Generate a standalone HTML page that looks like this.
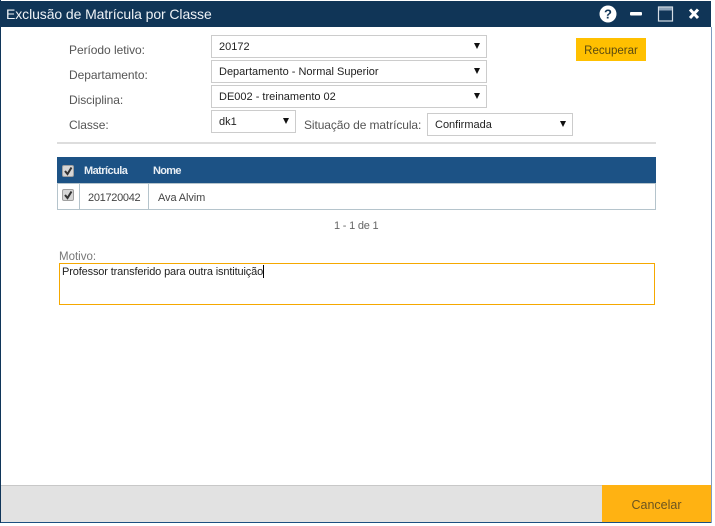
<!DOCTYPE html>
<html>
<head>
<meta charset="utf-8">
<style>
html,body{margin:0;padding:0;background:#fff;width:715px;height:526px;overflow:hidden}
body{font-family:"Liberation Sans",sans-serif;position:relative}
.a{position:absolute;white-space:nowrap}
.lbl{font-size:12px;color:#555;line-height:16px;letter-spacing:-.05px}
.sel{position:absolute;box-sizing:border-box;background:#fff;border:1px solid #ccc;height:23px;font-size:11px;color:#222;line-height:22px;padding-left:7px}
.sel:after{content:"";position:absolute;right:6px;top:7px;border-left:3.5px solid transparent;border-right:3.5px solid transparent;border-top:6px solid #111}
.cb{position:absolute;box-sizing:border-box;width:12px;height:12px;background:#d6d6d6;border:1px solid #a0a0a0;border-radius:2px}
</style>
</head>
<body>
<div class="a" style="left:0;top:0;width:712px;height:523px;background:#fff"></div>
<div class="a" style="left:0;top:0;width:1px;height:523px;background:#10365a"></div>
<div class="a" style="left:1px;top:522px;width:711px;height:1px;background:#1c4f80"></div>
<div class="a" style="left:711px;top:27px;width:1px;height:496px;background:#7f9cc0"></div>
<div class="a" style="left:0;top:1px;width:711px;height:26px;background:#103557"></div>
<div class="a" style="left:6px;top:5px;font-size:14px;line-height:18px;letter-spacing:-.09px;color:#eef2f6">Exclusão de Matrícula por Classe</div>

<svg class="a" style="left:595px;top:3px" width="112" height="22" viewBox="0 0 112 22">
<circle cx="13" cy="11" r="8.5" fill="#fff"/>
<text x="13" y="15.5" text-anchor="middle" font-family="Liberation Sans" font-weight="700" font-size="13" fill="#103557">?</text>
<rect x="35" y="9" width="12" height="3.5" rx="1" fill="#fff"/>
<rect x="63.5" y="4" width="14" height="14" fill="none" stroke="#d5dde5" stroke-width="1.2"/>
<rect x="64" y="4.5" width="13" height="3" fill="#8ea3b8"/>
<path d="M95 6.5 L103 15 M103 6.5 L95 15" stroke="#fff" stroke-width="3"/>
</svg>

<div class="a lbl" style="left:69px;top:42px">Período letivo:</div>
<div class="a lbl" style="left:69px;top:67px">Departamento:</div>
<div class="a lbl" style="left:69px;top:92px">Disciplina:</div>
<div class="a lbl" style="left:69px;top:117px">Classe:</div>
<div class="sel" style="left:211px;top:35px;width:276px">20172</div>
<div class="sel" style="left:211px;top:60px;width:276px">Departamento - Normal Superior</div>
<div class="sel" style="left:211px;top:85px;width:276px">DE002 - treinamento 02</div>
<div class="sel" style="left:211px;top:110px;width:85px">dk1</div>
<div class="a lbl" style="left:304px;top:117px;letter-spacing:-.1px">Situação de matrícula:</div>
<div class="sel" style="left:427px;top:113px;width:146px;line-height:22px">Confirmada</div>
<div class="a" style="left:576px;top:38px;width:70px;height:23px;background:#ffc000;color:#5a4a10;font-size:11.5px;line-height:26px;text-align:center">Recuperar</div>
<div class="a" style="left:57px;top:142px;width:599px;height:2px;background:#ddd"></div>

<div class="a" style="left:57px;top:157px;width:599px;height:26px;background:#1c5285"></div>
<div class="cb" style="left:62px;top:165px"></div>
<svg class="a" style="left:62px;top:165px" width="12" height="12"><path d="M3 6 L5.5 9 L9.5 2.5" fill="none" stroke="#333" stroke-width="2"/></svg>
<div class="a" style="left:84px;top:164px;font-size:11px;font-weight:700;line-height:14px;letter-spacing:-.55px;color:#e8eef4">Matrícula</div>
<div class="a" style="left:153px;top:164px;font-size:11px;font-weight:700;line-height:14px;letter-spacing:-.7px;color:#e8eef4">Nome</div>
<div class="a" style="left:57px;top:183px;width:599px;height:27px;box-sizing:border-box;border:1px solid #b5c4cc;background:#fff"></div>
<div class="a" style="left:79px;top:183px;width:1px;height:27px;background:#b5c4cc"></div>
<div class="a" style="left:148px;top:183px;width:1px;height:27px;background:#b5c4cc"></div>
<div class="cb" style="left:62px;top:189px"></div>
<svg class="a" style="left:62px;top:189px" width="12" height="12"><path d="M3 6 L5.5 9 L9.5 2.5" fill="none" stroke="#333" stroke-width="2"/></svg>
<div class="a" style="left:88px;top:191px;font-size:11px;line-height:14px;letter-spacing:-.3px;color:#444">201720042</div>
<div class="a" style="left:158px;top:191px;font-size:11px;line-height:14px;letter-spacing:-.1px;color:#444">Ava Alvim</div>
<div class="a" style="left:334px;top:219px;font-size:11px;line-height:14px;letter-spacing:-.2px;color:#666">1 - 1 de 1</div>

<div class="a" style="left:59px;top:250px;font-size:11.5px;line-height:14px;color:#777">Motivo:</div>
<div class="a" style="left:59px;top:263px;width:596px;height:42px;box-sizing:border-box;border:1px solid #f5a800;background:#fff"></div>
<div class="a" style="left:62px;top:265px;font-size:11px;line-height:14px;letter-spacing:-.14px;color:#222">Professor transferido para outra isntituição</div>
<div class="a" style="left:263px;top:265px;width:1px;height:13px;background:#000"></div>

<div class="a" style="left:1px;top:485px;width:601px;height:37px;background:#e2e2e2;border-top:1px solid #c8c8c8;box-sizing:border-box"></div>
<div class="a" style="left:602px;top:485px;width:109px;height:37px;background:#ffb212;color:#6b5420;font-size:12.5px;line-height:41px;text-align:center">Cancelar</div>
</body>
</html>
